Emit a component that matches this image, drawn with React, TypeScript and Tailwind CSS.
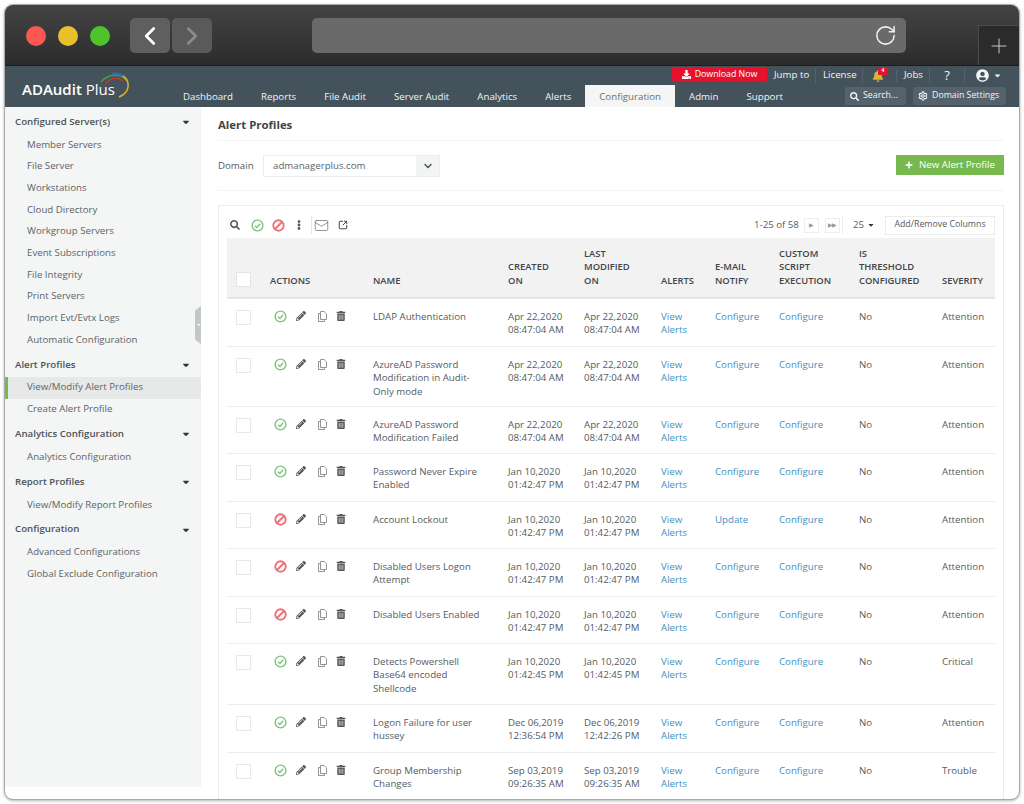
import React from "react";
import { FaPencilAlt, FaTrashAlt, FaUserCircle, FaSearch, FaBell, FaPlus, FaCaretDown, FaEllipsisV, FaDownload } from "react-icons/fa";
import { Mail, SquareArrowOutUpRight, RotateCw, ChevronLeft, ChevronRight, ChevronDown, Plus, Settings } from "lucide-react";

const font = "font-['Open_Sans',sans-serif]";

function Check({ size = 13 }: { size?: number }) {
  return (
    <svg width={size} height={size} viewBox="0 0 14 14" fill="none" stroke="#7fc47f" strokeWidth="1.5">
      <circle cx="7" cy="7" r="5.8" />
      <path d="M4.2 7.2 6.3 9.2 9.9 5.2" />
    </svg>
  );
}
function Ban({ size = 13 }: { size?: number }) {
  return (
    <svg width={size} height={size} viewBox="0 0 14 14" fill="none" stroke="#ee6f73" strokeWidth="2">
      <circle cx="7" cy="7" r="5.6" />
      <path d="M3.2 10.8 10.8 3.2" />
    </svg>
  );
}
function CopyIcon() {
  return (
    <svg width="9" height="11" viewBox="0 0 9 11" fill="none" stroke="#888" strokeWidth="0.9">
      <path d="M2.5 0.5H6.2L8.5 2.8V8.5H2.5Z" />
      <path d="M2.5 2.5H0.5V10.5H6.5V8.5" />
    </svg>
  );
}

const sidebar: { title: string; items: string[] }[] = [
  { title: "Configured Server(s)", items: ["Member Servers", "File Server", "Workstations", "Cloud Directory", "Workgroup Servers", "Event Subscriptions", "File Integrity", "Print Servers", "Import Evt/Evtx Logs", "Automatic Configuration"] },
  { title: "Alert Profiles", items: ["View/Modify Alert Profiles", "Create Alert Profile"] },
  { title: "Analytics Configuration", items: ["Analytics Configuration"] },
  { title: "Report Profiles", items: ["View/Modify Report Profiles"] },
  { title: "Configuration", items: ["Advanced Configurations", "Global Exclude Configuration"] },
];

type Row = { on: boolean; name: string[]; c: string[]; m: string[]; email?: string; sev: string; h: string };
const rows: Row[] = [
  { on: true, name: ["LDAP Authentication"], c: ["Apr 22,2020", "08:47:04 AM"], m: ["Apr 22,2020", "08:47:04 AM"], sev: "Attention", h: "h-[48px]" },
  { on: true, name: ["AzureAD Password", "Modification in Audit-", "Only mode"], c: ["Apr 22,2020", "08:47:04 AM"], m: ["Apr 22,2020", "08:47:04 AM"], sev: "Attention", h: "h-[60px]" },
  { on: true, name: ["AzureAD Password", "Modification Failed"], c: ["Apr 22,2020", "08:47:04 AM"], m: ["Apr 22,2020", "08:47:04 AM"], sev: "Attention", h: "h-[47px]" },
  { on: true, name: ["Password Never Expire", "Enabled"], c: ["Jan 10,2020", "01:42:47 PM"], m: ["Jan 10,2020", "01:42:47 PM"], sev: "Attention", h: "h-[48px]" },
  { on: false, name: ["Account Lockout"], c: ["Jan 10,2020", "01:42:47 PM"], m: ["Jan 10,2020", "01:42:47 PM"], email: "Update", sev: "Attention", h: "h-[47px]" },
  { on: false, name: ["Disabled Users Logon", "Attempt"], c: ["Jan 10,2020", "01:42:47 PM"], m: ["Jan 10,2020", "01:42:47 PM"], sev: "Attention", h: "h-[48px]" },
  { on: false, name: ["Disabled Users Enabled"], c: ["Jan 10,2020", "01:42:47 PM"], m: ["Jan 10,2020", "01:42:47 PM"], sev: "Attention", h: "h-[47px]" },
  { on: true, name: ["Detects Powershell", "Base64 encoded", "Shellcode"], c: ["Jan 10,2020", "01:42:45 PM"], m: ["Jan 10,2020", "01:42:45 PM"], sev: "Critical", h: "h-[61px]" },
  { on: true, name: ["Logon Failure for user", "hussey"], c: ["Dec 06,2019", "12:36:54 PM"], m: ["Dec 06,2019", "12:42:26 PM"], sev: "Attention", h: "h-[48px]" },
  { on: true, name: ["Group Membership", "Changes"], c: ["Sep 03,2019", "09:26:35 AM"], m: ["Sep 03,2019", "09:26:35 AM"], sev: "Trouble", h: "h-[48px]" },
];

const grid = "grid grid-cols-[43px_103px_135px_76px_77px_54px_64px_80px_83px_52px]";
const nav = ["Dashboard", "Reports", "File Audit", "Server Audit", "Analytics", "Alerts", "Configuration", "Admin", "Support"];

function Lines({ l, className = "" }: { l: string[]; className?: string }) {
  return (
    <div className={className}>
      {l.map((t) => (
        <div key={t} className="whitespace-nowrap">{t}</div>
      ))}
    </div>
  );
}

export default function App() {
  return (
    <div className={`${font} w-[1024px] h-[804px] overflow-hidden bg-white p-[4px]`}>
      <div className="relative flex h-[796px] flex-col overflow-hidden rounded-[9px] border border-[#a9a9a9] bg-white shadow-[0_1px_3px_rgba(0,0,0,0.3)]">
        {/* browser chrome */}
        <div className="relative flex h-[61px] shrink-0 items-start border-b border-[#1c1c1c] bg-gradient-to-b from-[#444444] to-[#2c2c2c] pl-[21px] pt-[13px]">
          <div className="mt-[8px] flex gap-[12px]">
            <span className="h-[20px] w-[20px] rounded-full bg-[#fc5753]" />
            <span className="h-[20px] w-[20px] rounded-full bg-[#e9c02a]" />
            <span className="h-[20px] w-[20px] rounded-full bg-[#4fc32c]" />
          </div>
          <div className="ml-[20px] flex gap-[2px]">
            <div className="flex h-[35px] w-[40px] items-center justify-center rounded-[5px] bg-[#5f5f5f]">
              <ChevronLeft size={30} strokeWidth={2.2} color="#fff" />
            </div>
            <div className="flex h-[35px] w-[40px] items-center justify-center rounded-[5px] bg-[#5a5a5a]">
              <ChevronRight size={30} strokeWidth={2} color="#8c8c8c" />
            </div>
          </div>
          <div className="ml-[100px] flex h-[35px] w-[594px] items-center justify-end rounded-[5px] bg-[#6a6a6a] pr-[9px]">
            <RotateCw size={23} strokeWidth={1.6} color="#f0f0f0" />
          </div>
          <div className="absolute bottom-0 right-0 flex h-[40px] w-[41px] items-center justify-center border-l border-t border-[#4a4a4a] bg-[#2b2b2b]">
            <Plus size={24} strokeWidth={1} color="#c8c8c8" />
          </div>
        </div>

        {/* app header */}
        <div className="flex h-[41px] shrink-0 bg-[#44525c] text-[#f2f4f5]">
          <div className="relative flex w-[164px] shrink-0 items-end pb-[8px] pl-[17px]">
            <span className="text-[15px] leading-[20px] text-white">
              <span className="font-semibold">ADAudit</span> Plus
            </span>
            <svg className="absolute left-[90px] top-[6px]" width="40" height="28" viewBox="0 0 40 28" fill="none">
              <path d="M10 13 C14 6 22 4 28 9" stroke="#c0392b" strokeWidth="1.4" />
              <path d="M6 10 C13 2 24 1 31 8" stroke="#3e9b52" strokeWidth="1.6" />
              <path d="M17 2 C26 0 33 6 33 12" stroke="#2c6fb3" strokeWidth="2" />
              <path d="M28 4 C35 9 36 20 24 25" stroke="#e0b01f" strokeWidth="1.6" />
            </svg>
          </div>
          <div className="flex min-w-0 flex-1 flex-col">
            <div className="flex h-[19px] items-start justify-end text-[9.7px]">
              <div className="mt-[1px] flex h-[14px] w-[95px] items-center justify-center gap-[4px] rounded-[1px] bg-[#e8112d] pt-[1px] text-[8.8px] text-white">
                <FaDownload size={9} />
                <span>Download Now</span>
              </div>
              <div className="mt-[2px] flex h-[15px] items-center">
                <span className="w-[49px] border-r border-[#55636d] pl-[7px]">Jump to</span>
                <span className="w-[47px] border-r border-[#55636d] pl-[7px]">License</span>
                <span className="relative flex w-[34px] justify-center border-r border-[#55636d] pr-[4px]">
                  <FaBell size={12} color="#d5b62c" />
                  <span className="absolute left-[15px] top-[-2px] flex h-[7px] w-[10px] items-center justify-center rounded-[1px] bg-[#e8112d] text-[5px] font-bold text-white">4</span>
                </span>
                <span className="w-[33px] border-r border-[#55636d] pl-[7px]">Jobs</span>
                <span className="w-[35px] border-r border-[#55636d] text-center text-[13px] leading-[15px]">?</span>
                <span className="flex w-[45px] items-center gap-[4px] pl-[11px]">
                  <FaUserCircle size={13} />
                  <FaCaretDown size={9} />
                </span>
                <span className="w-[9px]" />
              </div>
            </div>
            <div className="flex h-[22px] items-stretch text-[9.7px]">
              {nav.map((n) => (
                <div
                  key={n}
                  className={
                    n === "Configuration"
                      ? "flex items-center bg-[#f5f5f5] px-[14px] pt-[2px] text-[#667077]"
                      : "flex items-center px-[14px] pt-[2px]"
                  }
                >
                  {n}
                </div>
              ))}
              <div className="ml-auto mr-[13px] mt-[2px] flex h-[18px] gap-[7px] text-[8.8px]">
                <div className="flex w-[61px] items-center gap-[4px] rounded-[2px] bg-[#55626b] pl-[5px]">
                  <FaSearch size={9} />
                  Search...
                </div>
                <div className="flex w-[93px] items-center gap-[4px] rounded-[2px] bg-[#55626b] pl-[5px]">
                  <Settings size={10} strokeWidth={2.6} />
                  Domain Settings
                </div>
              </div>
            </div>
          </div>
        </div>

        <div className="flex min-h-0 flex-1">
          {/* sidebar */}
          <aside className="relative h-[680px] w-[196px] shrink-0 bg-[#f4f5f5] pt-[1px] text-[9.7px] text-[#5c6367]">
            {sidebar.map((s) => (
              <div key={s.title} className="pt-[2px]">
                <div className="flex h-[24px] items-center justify-between pl-[10px] pr-[10px] font-semibold text-[#4c5357]">
                  <span>{s.title}</span>
                  <FaCaretDown size={10} color="#333" />
                </div>
                {s.items.map((i) => (
                  <div
                    key={i}
                    className={
                      i === "View/Modify Alert Profiles"
                        ? "flex h-[21.7px] items-center border-l-[3px] border-[#78b94f] bg-[#e7e9e9] pl-[19px]"
                        : "flex h-[21.7px] items-center pl-[22px]"
                    }
                  >
                    {i}
                  </div>
                ))}
              </div>
            ))}
            <div className="absolute right-0 top-[199px] flex h-[38px] w-[6px] items-center justify-center bg-[#c3c7c9] [clip-path:polygon(100%_0,100%_100%,0_88%,0_12%)]">
              <span className="text-[5px] text-white">◂</span>
            </div>
          </aside>

          {/* main */}
          <main className="min-w-0 flex-1 pl-[17px] pr-[15px] text-[9.7px] text-[#555b5f]">
            <div className="flex h-[34px] items-center border-b border-[#f5f5f5] pt-[2px] text-[11.4px] font-bold text-[#3f4549]">Alert Profiles</div>
            <div className="flex h-[50px] items-start justify-between border-b border-[#f3f3f3] pt-[14px]">
              <div className="flex items-center">
                <span className="w-[45px]">Domain</span>
                <div className="flex h-[22px] w-[177px] items-stretch border border-[#e9eeee]">
                  <span className="flex-1 self-center pl-[9px] text-[#5f6468]">admanagerplus.com</span>
                  <span className="flex w-[23px] items-center justify-center bg-[#f3f5f5]">
                    <ChevronDown size={12} strokeWidth={3} color="#555" />
                  </span>
                </div>
              </div>
              <div className="flex h-[20px] w-[108px] items-center justify-center gap-[6px] bg-[#78b94f] text-white">
                <FaPlus size={8} />
                New Alert Profile
              </div>
            </div>

            <section className="mt-[14px] border border-b-0 border-[#ececec] px-[8px]">
              <div className="flex h-[32px] items-center pt-[6px]">
                <div className="flex items-center">
                  <FaSearch size={10} color="#555" className="ml-[3px]" />
                  <span className="ml-[11px]"><Check size={13} /></span>
                  <span className="ml-[8px]"><Ban size={13} /></span>
                  <FaEllipsisV size={10} color="#555" className="ml-[9px]" />
                  <span className="ml-[7px] flex h-[18px] items-center border-l border-[#e4e4e4] pl-[2px]">
                    <Mail size={15} strokeWidth={1} color="#555" />
                  </span>
                  <SquareArrowOutUpRight size={10} strokeWidth={2.4} color="#444" className="ml-[9px]" />
                </div>
                <div className="ml-auto flex items-center">
                  <span>1-25 of 58</span>
                  <span className="ml-[5px] flex h-[15px] w-[15px] items-center justify-center border border-[#eeeeee] text-[6px] text-[#999]">▶</span>
                  <span className="ml-[6px] flex h-[15px] w-[15px] items-center justify-center border border-[#eeeeee] text-[6px] tracking-[-1px] text-[#999]">▶▶</span>
                  <span className="ml-[2px] flex h-[18px] items-center gap-[3px] border-l border-[#ececec] pl-[10px]">
                    25 <FaCaretDown size={8} color="#333" />
                  </span>
                  <span className="ml-[10px] flex h-[19px] w-[110px] items-center justify-center border border-[#ececec] text-[8.8px]">Add/Remove Columns</span>
                </div>
              </div>

              <div className={`${grid} h-[61px] items-end border-b-2 border-[#e6e6e6] bg-[#f2f2f2] pb-[10px] text-[9.4px] font-semibold leading-[13.5px] text-[#3f4549]`}>
                <div className="pl-[9px]"><div className="h-[15px] w-[15px] border border-[#e4e4e4] bg-white" /></div>
                <div>ACTIONS</div>
                <div>NAME</div>
                <Lines l={["CREATED", "ON"]} />
                <Lines l={["LAST", "MODIFIED", "ON"]} />
                <div>ALERTS</div>
                <Lines l={["E-MAIL", "NOTIFY"]} />
                <Lines l={["CUSTOM", "SCRIPT", "EXECUTION"]} />
                <Lines l={["IS", "THRESHOLD", "CONFIGURED"]} />
                <div>SEVERITY</div>
              </div>

              {rows.map((r) => (
                <div key={r.name[0]} className={`${grid} ${r.h} box-border border-b border-[#ececec] pt-[10.5px] leading-[13.5px]`}>
                  <div className="pl-[9px]"><div className="h-[15px] w-[15px] border border-[#e8e8e8]" /></div>
                  <div className="flex h-[13px] items-center pl-[4px]">
                    <span className="w-[22px]">{r.on ? <Check /> : <Ban />}</span>
                    <span className="w-[22px]"><FaPencilAlt size={10} color="#555" /></span>
                    <span className="w-[18px]"><CopyIcon /></span>
                    <FaTrashAlt size={10} color="#555" />
                  </div>
                  <Lines l={r.name} />
                  <Lines l={r.c} />
                  <Lines l={r.m} />
                  <Lines l={["View", "Alerts"]} className="text-[#3f8fc0]" />
                  <div className="text-[#3f8fc0]">{r.email ?? "Configure"}</div>
                  <div className="text-[#3f8fc0]">Configure</div>
                  <div>No</div>
                  <div>{r.sev}</div>
                </div>
              ))}
            </section>
          </main>
        </div>
      </div>
    </div>
  );
}
